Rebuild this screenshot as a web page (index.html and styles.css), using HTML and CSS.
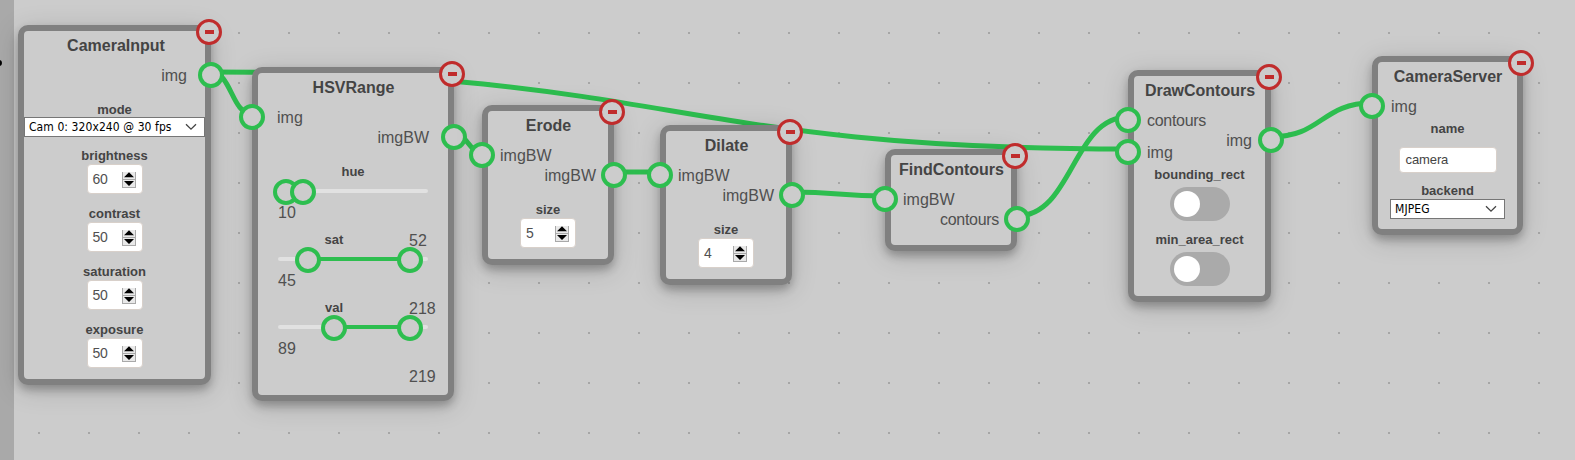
FILE: index.html
```html
<!DOCTYPE html>
<html lang="en">
<head>
<meta charset="utf-8">
<title>Vision pipeline</title>
<link rel="stylesheet" href="styles.css">
</head>
<body>
<svg class="defs" width="0" height="0">
  <symbol id="spin" viewBox="0 0 15 17">
    <rect x="0" y="1" width="14" height="16" fill="#e9e9e9"/>
    <path d="M.5 1V17M13.5 1V17M0 8.5H14M0 16.5H14" stroke="#a9a9a9" fill="none"/>
    <path d="M7 1.200L12 6.200H2zM7 15L2 10H12z" fill="#000"/>
  </symbol>
  <symbol id="chev" viewBox="0 0 12 8">
    <path d="M1 1.200L6 6.200L11 1.200" fill="none" stroke="#444" stroke-width="1.300"/>
  </symbol>
</svg>
<main class="editor">
  <aside class="dock"><i class="dock-mark"></i></aside>
  <svg class="wires" width="1575" height="460">
    <path d="M211 72C669.500 72 669.500 149 1128 149"/>
    <path d="M211 72C231.500 72 231.500 114 252 114"/>
    <path d="M454 134C468 134 468 152 482 152"/>
    <path d="M614 172H660"/>
    <path d="M792 192C838.500 192 838.500 196 885 196"/>
    <path d="M1017 216C1072.500 216 1072.500 117 1128 117"/>
    <path d="M1271 137C1321.500 137 1321.500 103 1372 103"/>
  </svg>

  <section class="node camera-input">
    <button class="remove"></button>
    <h2>CameraInput</h2>
    <div class="ports">
      <div class="inputs"></div>
      <div class="outputs first"><div class="port"><i></i><span>img</span></div></div>
    </div>
    <div class="fields">
      <div class="field"><label>mode</label><div class="select wide"><span>Cam 0: 320x240 @ 30 fps</span><svg><use href="#chev"/></svg></div></div>
      <div class="field"><label>brightness</label><div class="number"><span>60</span><svg><use href="#spin"/></svg></div></div>
      <div class="field"><label>contrast</label><div class="number"><span>50</span><svg><use href="#spin"/></svg></div></div>
      <div class="field"><label>saturation</label><div class="number"><span>50</span><svg><use href="#spin"/></svg></div></div>
      <div class="field"><label>exposure</label><div class="number"><span>50</span><svg><use href="#spin"/></svg></div></div>
    </div>
  </section>

  <section class="node hsv">
    <button class="remove"></button>
    <h2>HSVRange</h2>
    <div class="ports">
      <div class="inputs"><div class="port"><i></i><span>img</span></div></div>
      <div class="outputs"><div class="port"><i></i><span>imgBW</span></div></div>
    </div>
    <div class="ranges">
      <div class="range"><label>hue</label><div class="slider"><b style="left:8px;width:17px"></b><i style="left:8px"></i><i style="left:25px"></i></div><span class="low">10</span><span class="high">52</span></div>
      <div class="range"><label class="shift">sat</label><div class="slider"><b style="left:30px;width:102px"></b><i style="left:30px"></i><i style="left:132px"></i></div><span class="low">45</span><span class="high">218</span></div>
      <div class="range"><label class="shift">val</label><div class="slider"><b style="left:56px;width:76px"></b><i style="left:56px"></i><i style="left:132px"></i></div><span class="low">89</span><span class="high">219</span></div>
    </div>
  </section>

  <section class="node erode">
    <button class="remove"></button>
    <h2>Erode</h2>
    <div class="ports">
      <div class="inputs"><div class="port"><i></i><span>imgBW</span></div></div>
      <div class="outputs"><div class="port"><i></i><span>imgBW</span></div></div>
    </div>
    <div class="fields"><div class="field"><label>size</label><div class="number"><span>5</span><svg><use href="#spin"/></svg></div></div></div>
  </section>

  <section class="node dilate">
    <button class="remove"></button>
    <h2>Dilate</h2>
    <div class="ports">
      <div class="inputs"><div class="port"><i></i><span>imgBW</span></div></div>
      <div class="outputs"><div class="port"><i></i><span>imgBW</span></div></div>
    </div>
    <div class="fields"><div class="field"><label>size</label><div class="number"><span>4</span><svg><use href="#spin"/></svg></div></div></div>
  </section>

  <section class="node find">
    <button class="remove"></button>
    <h2>FindContours</h2>
    <div class="ports">
      <div class="inputs"><div class="port"><i></i><span>imgBW</span></div></div>
      <div class="outputs"><div class="port"><i></i><span class="narrow">contours</span></div></div>
    </div>
  </section>

  <section class="node draw">
    <button class="remove"></button>
    <h2>DrawContours</h2>
    <div class="ports">
      <div class="inputs"><div class="port"><i></i><span class="narrow">contours</span></div><div class="port"><i></i><span>img</span></div></div>
      <div class="outputs"><div class="port"><i></i><span>img</span></div></div>
    </div>
    <div class="fields">
      <div class="field"><label>bounding_rect</label><div class="toggle"><i></i></div></div>
      <div class="field"><label>min_area_rect</label><div class="toggle"><i></i></div></div>
    </div>
  </section>

  <section class="node server">
    <button class="remove"></button>
    <h2>CameraServer</h2>
    <div class="ports">
      <div class="inputs"><div class="port"><i></i><span>img</span></div></div>
      <div class="outputs"></div>
    </div>
    <div class="fields">
      <div class="field"><label>name</label><div class="text">camera</div></div>
      <div class="field"><label>backend</label><div class="select backend"><span>MJPEG</span><svg><use href="#chev"/></svg></div></div>
    </div>
  </section>
</main>
</body>
</html>
```
FILE: styles.css
```css
* { box-sizing: border-box; }
body { margin: 0; overflow: hidden; font-family: "Liberation Sans", Arial, sans-serif; color: #444; }
.defs { position: absolute; }
.editor {
  position: relative; width: 1575px; height: 460px; overflow: hidden;
  background: conic-gradient(from 90deg at 48px 48px, #a6a6a6 25%, #ccc 0) -10px -16px / 50px 50px;
}
.dock { position: relative; width: 14px; height: 460px; background: #a9a9a9; }
.dock-mark { position: absolute; left: -4px; top: 60px; width: 6px; height: 6px; border-radius: 50%; background: #000; }
.wires { position: absolute; left: 0; top: 0; fill: none; stroke: #2dbe4f; stroke-width: 5; }

.node {
  position: absolute; border: 6px solid #808080; border-radius: 10px; background: #ccc;
  padding-top: 6px; --gap: 5px;
  box-shadow: 0 5px 8px rgba(0,0,0,.24), 0 5px 26px rgba(0,0,0,.17);
}
.camera-input { left: 18px; top: 25px; width: 193px; height: 360px; --gap: 11px; }
.hsv { left: 252px; top: 67px; width: 202px; height: 334px; --gap: 12px; }
.erode { left: 482px; top: 105px; width: 132px; height: 160px; }
.dilate { left: 660px; top: 125px; width: 132px; height: 160px; }
.find { left: 885px; top: 149px; width: 132px; height: 102px; }
.draw { left: 1128px; top: 70px; width: 143px; height: 232px; --gap: 6px; }
.server { left: 1372px; top: 56px; width: 151px; height: 179px; --gap: 6px; }

.remove {
  position: absolute; right: -17px; top: -12px; width: 26px; height: 26px; padding: 0;
  border: 3px solid #c02c2c; border-radius: 50%; background: #ccc;
  display: grid; place-items: center;
}
.remove::before { content: ""; width: 9px; height: 4px; background: #c02c2c; }
h2 { margin: 0 0 10px; padding-left: 1px; font-size: 16px; line-height: 18px; text-align: center; white-space: nowrap; }
.camera-input h2 { padding-left: 3px; }

.ports { display: flex; justify-content: space-between; }
.inputs, .outputs { display: flex; flex-direction: column; gap: 12px; width: 50%; }
.outputs { padding-top: 20px; }
.outputs.first { padding-top: 0; }
.port { display: flex; align-items: center; gap: var(--gap); height: 20px; font-size: 16px; }
.port span { padding-top: 2px; color: #505050; white-space: nowrap; }
.port .narrow { letter-spacing: -.3px; }
.outputs .port { flex-direction: row-reverse; }
.port i { flex: none; width: 26px; height: 26px; border: 4px solid #2dbe4f; border-radius: 50%; background: #ccc; }
.inputs .port i { margin-left: -19px; }
.outputs .port i { margin-right: -19px; }

.fields { display: flex; flex-direction: column; gap: 12px; margin-top: 17px; }
.camera-input .fields { margin-top: 16px; }
.camera-input .field:first-child { margin-bottom: -1px; }
.field { display: flex; flex-direction: column; align-items: center; }
label { font-size: 13px; font-weight: bold; line-height: 16px; height: 16px; }
.camera-input .field:first-child label { padding-top: 1px; }
.number {
  display: flex; align-items: center; justify-content: space-between;
  width: 56px; height: 30px; padding: 0 5px 0 5px;
  border: 1px solid #d8d0ca; border-radius: 4px; background: #fff; font-size: 14px; letter-spacing: -.3px;
}
.number span { color: #505050; }
.number svg { width: 15px; height: 17px; }
.select {
  display: flex; align-items: center; justify-content: space-between;
  width: 115px; height: 20px; padding: 0 7px 0 5px;
  border: 1px solid #767676; background: #fff; color: #000;
  font: 12px "DejaVu Sans Condensed", "DejaVu Sans", sans-serif; letter-spacing: .08px; white-space: nowrap;
}
.select.wide { width: 181px; padding-left: 4px; }
.backend { padding-left: 4px; }
.select svg { width: 12px; height: 8px; }
.text { width: 98px; height: 26px; margin-top: 10px; padding-left: 6px; border: 1px solid #d8d0ca; border-radius: 4px; background: #fff; font-size: 13px; line-height: 24px; letter-spacing: -.1px; }

.ranges { margin: 17px 0 0 20px; width: 150px; }
.range { height: 68px; }
.range label { display: block; height: 15px; text-align: center; }
.range label.shift { padding-right: 38px; }
.slider { position: relative; height: 26px; }
.slider::before { content: ""; position: absolute; left: 0; top: 10px; width: 150px; height: 4px; border-radius: 2px; background: #e1e1e1; }
.slider b { position: absolute; top: 10px; height: 4px; background: #2dbe4f; }
.slider i { position: absolute; top: 0; width: 26px; height: 26px; margin-left: -13px; border: 4px solid #2dbe4f; border-radius: 50%; background: #ccc; }
.low, .high { display: block; font-size: 16px; line-height: 20px; color: #505050; }
.low { margin-top: -2px; }
.high { margin: 8px 0 0 131px; }

.draw .fields { margin-top: 5px; gap: 11px; }
.toggle { width: 60px; height: 34px; margin-top: 4px; padding: 4px; border-radius: 17px; background: #aaa; }
.toggle i { display: block; width: 26px; height: 26px; border-radius: 50%; background: #fff; }
.server .fields { margin-top: 5px; gap: 10px; }
```
